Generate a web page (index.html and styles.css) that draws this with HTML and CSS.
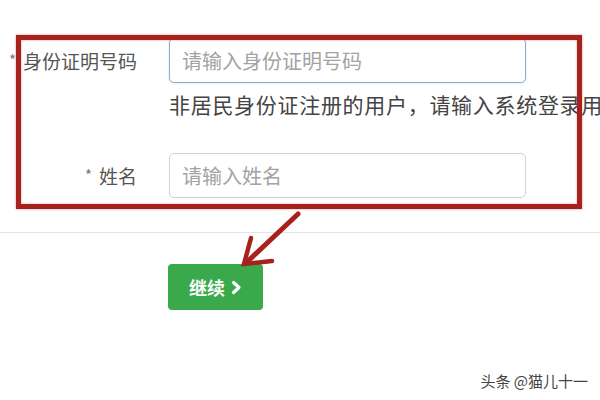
FILE: index.html
```html
<!DOCTYPE html>
<html lang="zh-CN">
<head>
  <meta charset="UTF-8" />
  <meta name="viewport" content="width=device-width, initial-scale=1.0"/>
  <title>身份验证</title>
  <link rel="stylesheet" href="styles.css">
</head>
<body>
  <div class="page">
    <form class="form">
      <div class="row">
        <label class="label"><span class="req">*</span>身份证明号码</label>
        <input class="field focused" type="text" placeholder="请输入身份证明号码" />
      </div>
      <p class="hint">非居民身份证注册的用户，请输入系统登录用户名</p>
      <div class="row">
        <label class="label"><span class="req">*</span>姓名</label>
        <input class="field" type="text" placeholder="请输入姓名" />
      </div>
    </form>

    <div class="divider"></div>

    <div class="actions">
      <button class="btn" type="button">继续
        <svg class="chevron" width="11" height="15" viewBox="0 0 11 15">
          <polyline points="2.5,2.5 8,7.5 2.5,12.5" fill="none" stroke="#fff" stroke-width="3.2" stroke-linecap="round" stroke-linejoin="round"/>
        </svg>
      </button>
    </div>
  </div>

  <!-- annotation drawn over the screenshot -->
  <div class="mark"></div>
  <svg class="arrow" width="600" height="400" viewBox="0 0 600 400">
    <g stroke="#a8211d" stroke-linecap="round" fill="none">
      <line x1="298" y1="214" x2="247" y2="262" stroke-width="5"/>
      <polyline points="251,238 244,264 272,261" stroke-width="4.5"/>
    </g>
  </svg>

  <div class="watermark">头条 @猫儿十一</div>
</body>
</html>
```

FILE: styles.css
```css
* {
  box-sizing: border-box;
}

body {
  font-family: "Noto Sans CJK SC", "Noto Sans", sans-serif;
  background-color: #fff;
  color: #444;
  margin: 0;
  padding: 0;
  width: 600px;
  height: 400px;
  overflow: hidden;
  position: relative;
}

.form {
  padding-top: 38px;
  margin: 0;
}

.row {
  display: flex;
  align-items: center;
}

.label {
  width: 137px;
  margin-right: 32px;
  text-align: right;
  font-size: 19px;
  color: #555;
  white-space: nowrap;
}

.req {
  margin-right: 7px;
  font-size: 15px;
  color: #777;
  vertical-align: 3px;
}

.field {
  width: 357px;
  height: 45px;
  border: 1px solid #d2d2d2;
  border-radius: 5px;
  padding: 0 12px;
  font-family: inherit;
  font-size: 20px;
  color: #444;
  outline: none;
}

.field::placeholder {
  color: #a3a3a3;
}

.field.focused {
  border-color: #8aaecb;
  box-shadow: 0 0 2px rgba(102, 150, 200, 0.35);
}

.hint {
  margin: 7px 0 35px 169px;
  width: 431px;
  overflow: hidden;
  line-height: 28px;
  font-size: 21px;
  letter-spacing: 0.7px;
  color: #444;
  white-space: nowrap;
}

.divider {
  margin-top: 34px;
  height: 1px;
  background: #e4e4e4;
}

.actions {
  padding: 31px 0 0 168px;
}

.btn {
  display: flex;
  align-items: center;
  justify-content: center;
  gap: 6px;
  width: 95px;
  height: 46px;
  border: none;
  border-radius: 4px;
  background-color: #3aa94b;
  color: #fff;
  font-family: inherit;
  font-size: 18px;
  font-weight: bold;
  cursor: pointer;
}

.chevron {
  display: block;
}

.mark {
  position: absolute;
  left: 16px;
  top: 35px;
  width: 566px;
  height: 174px;
  border: 5px solid #a8211d;
  box-shadow: 0 0 2px rgba(168, 33, 29, 0.5), inset 0 0 2px rgba(168, 33, 29, 0.5);
}

.arrow {
  position: absolute;
  left: 0;
  top: 0;
}

.watermark {
  position: absolute;
  right: 12px;
  bottom: 9px;
  font-size: 15px;
  color: #444;
}
```
